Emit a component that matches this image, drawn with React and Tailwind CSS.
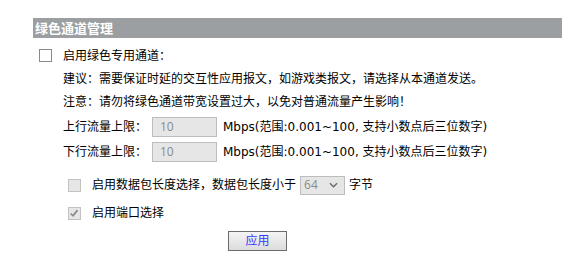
import React from 'react'

function Box({ checked = false, disabled = false }) {
  const tone = disabled || checked ? 'bg-[#e6e6e6] border-[#c2c2c2]' : 'bg-white border-[#8a8a8a]'
  return (
    <div className={`relative w-[13px] h-[13px] border ${tone}`}>
      {checked && (
        <svg viewBox="0 0 13 13" className="absolute left-0 top-0 w-[11px] h-[11px]">
          <path d="M2 6.5 L4.8 9.2 L10 2.5" fill="none" stroke="#8a8a8a" strokeWidth="2" />
        </svg>
      )}
    </div>
  )
}

function LimitRow({ label, className = '' }) {
  return (
    <div className={`flex items-center h-5 pl-[63px] ${className}`}>
      <span className="w-[89px]">{label}</span>
      <div className="w-[65px] h-5 border border-[#bdbdbd] bg-[#e6e6e6] text-[#8a8a8a] pl-[7px] leading-[18px]">10</div>
      <span className="ml-[6px] font-['DejaVu_Sans','Noto_Sans_CJK_SC',sans-serif]">Mbps(范围:0.001~100, 支持小数点后三位数字)</span>
    </div>
  )
}

export default function App() {
  return (
    <div className="w-[588px] h-[256px] bg-white text-black text-[12px] font-['Open_Sans','Noto_Sans_CJK_SC',sans-serif] overflow-hidden">
      <div className="ml-[33px] mt-[18px] w-[529px] h-5 bg-[#9b9fa2] text-white font-bold text-[13px] leading-5 pl-[2px]">
        绿色通道管理
      </div>

      <div className="flex items-center h-[13px] mt-[11px] pl-[39px]">
        <Box />
        <span className="ml-[11px]">启用绿色专用通道：</span>
      </div>

      <div className="flex items-center h-5 mt-[7px] pl-[63px]">
        建议：需要保证时延的交互性应用报文，如游戏类报文，请选择从本通道发送。
      </div>
      <div className="flex items-center h-5 mt-[3px] pl-[63px]">
        注意：请勿将绿色通道带宽设置过大，以免对普通流量产生影响！
      </div>

      <LimitRow label="上行流量上限：" className="mt-[5px]" />
      <LimitRow label="下行流量上限：" className="mt-[5px]" />

      <div className="flex items-center h-5 mt-[13px] pl-[68px]">
        <Box disabled />
        <span className="ml-[11px]">启用数据包长度选择，数据包长度小于</span>
        <div className="flex items-center justify-between ml-[4px] w-[45px] h-[19px] border border-[#bdbdbd] bg-[#e6e6e6] text-[#8a8a8a] pl-[3px] pr-[6px]">
          <span>64</span>
          <svg viewBox="0 0 10 6" className="w-[9px] h-[6px]">
            <path d="M1 1 L5 5 L9 1" fill="none" stroke="#6b6b6b" strokeWidth="1.6" />
          </svg>
        </div>
        <span className="ml-[4px]">字节</span>
      </div>

      <div className="flex items-center h-5 mt-[8px] pl-[68px]">
        <Box checked disabled />
        <span className="ml-[11px]">启用端口选择</span>
      </div>

      <div className="mt-[8px] pl-[228px]">
        <button className="w-[59px] h-5 border border-[#6b6b6b] bg-gradient-to-b from-[#f4f4f4] to-[#dcdcdc] text-[#3a3aff] text-[12px] leading-[18px]">
          应用
        </button>
      </div>
    </div>
  )
}
